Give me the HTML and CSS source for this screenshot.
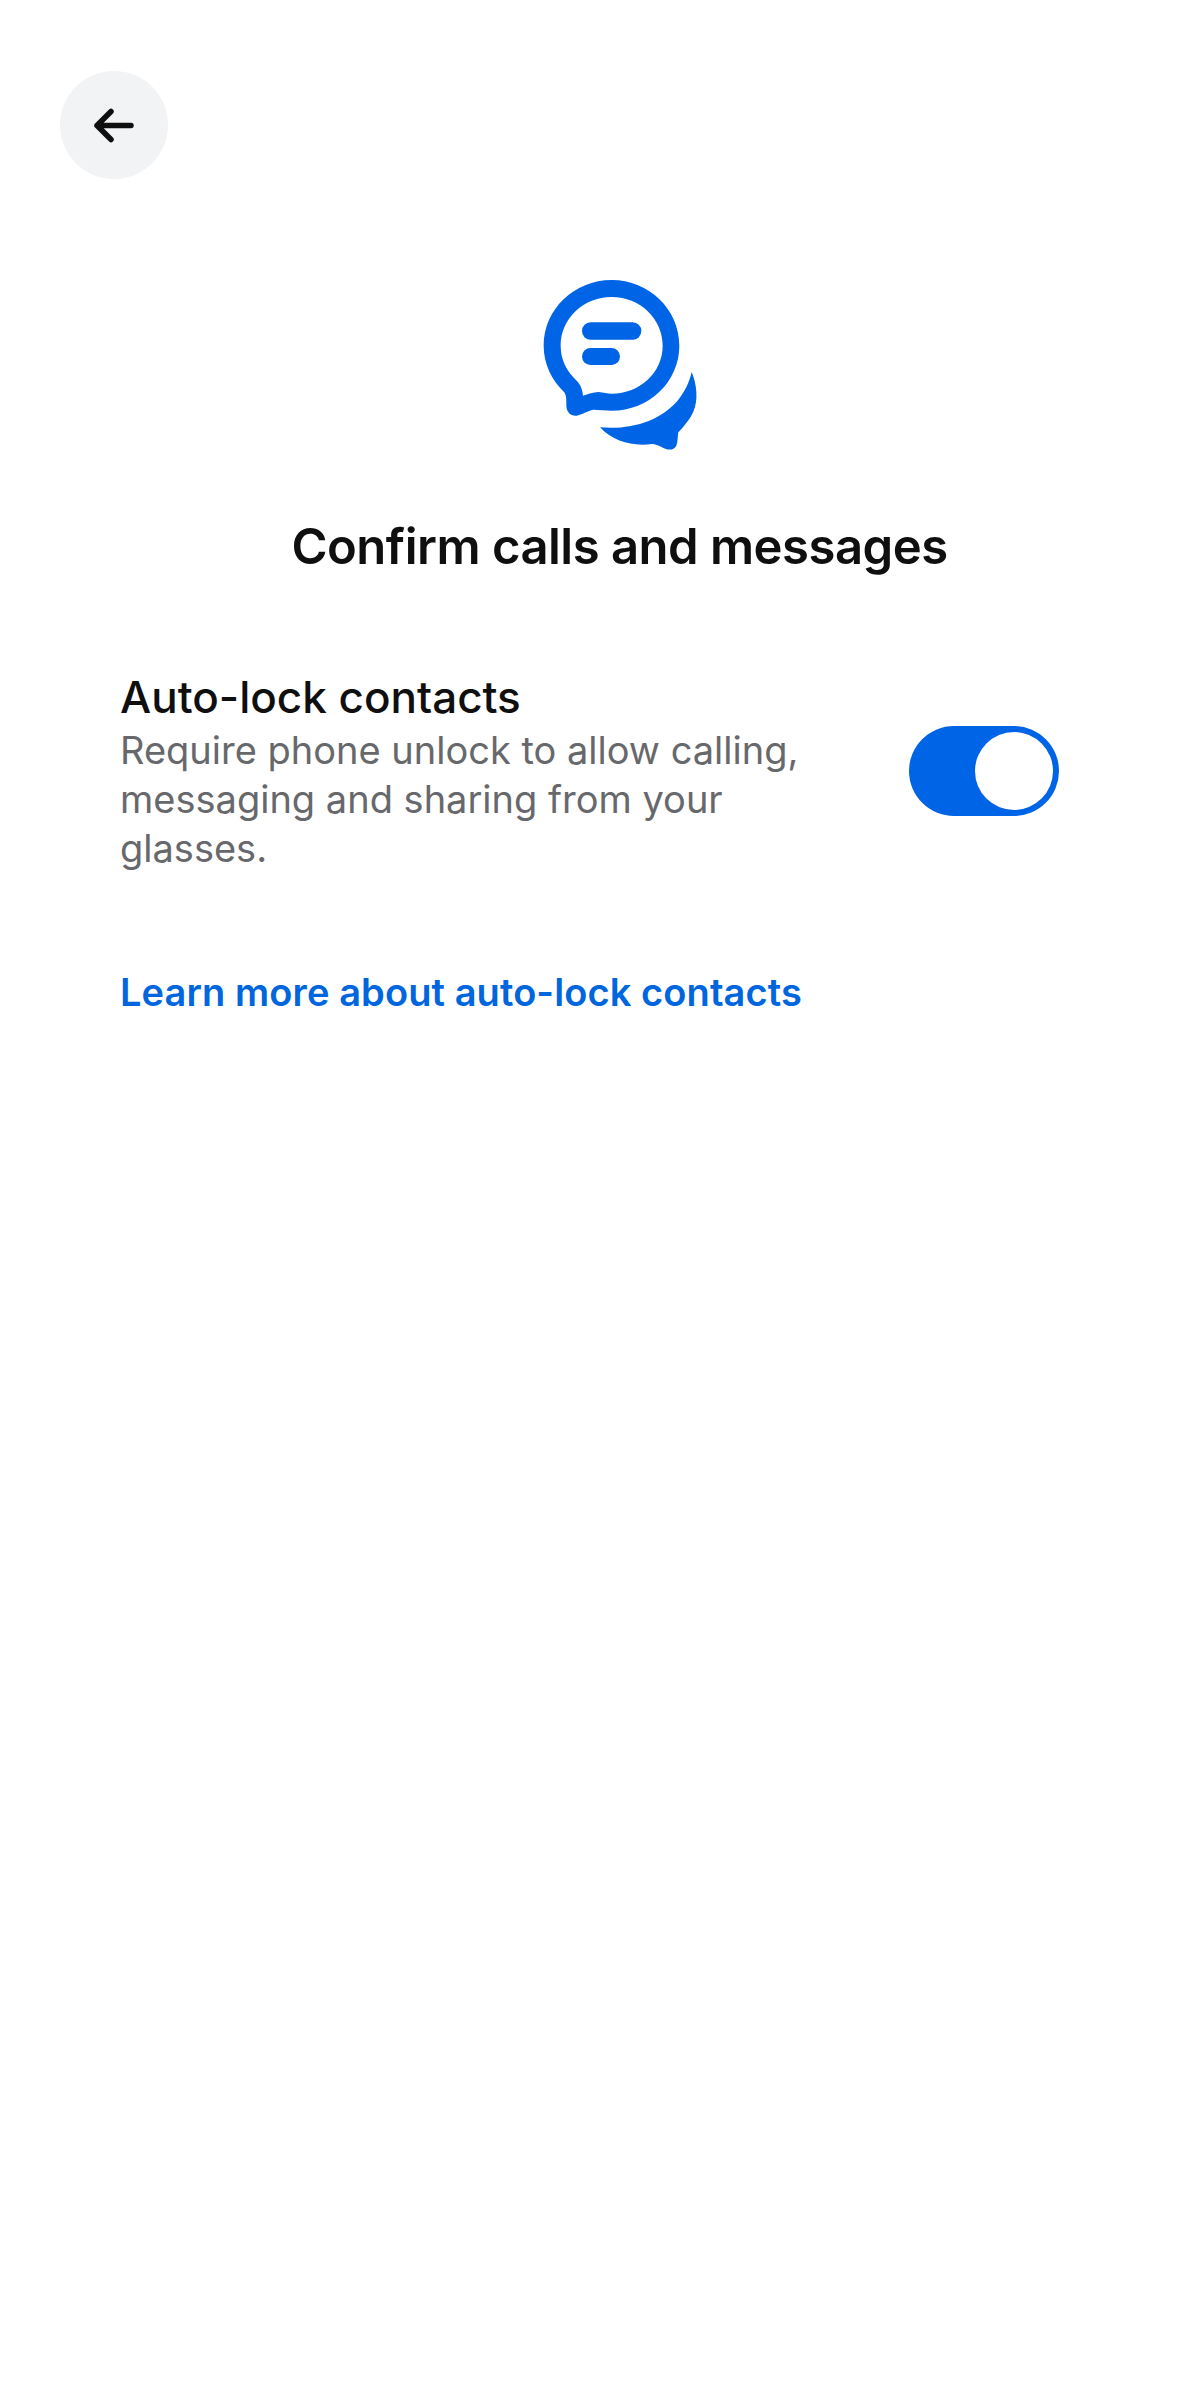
FILE: index.html
```html
<!DOCTYPE html>
<html lang="en">

<head>
  <meta charset="UTF-8">
  <title>Confirm calls and messages</title>
  <link rel="stylesheet" href="styles.css">
</head>

<body>
  <div class="page">
    <div class="topBar">
      <button class="backBtn" type="button" aria-label="Back">
        <svg width="48" height="48" viewBox="0 0 48 48" fill="none" stroke="#0f0f0f" stroke-width="5.500" stroke-linecap="round" stroke-linejoin="round">
          <path d="M7 24.500H41M21 10.500L7 24.500L21 38.500" />
        </svg>
      </button>
    </div>

    <div class="content">
      <svg class="heroIcon" width="190" height="200" viewBox="0 0 570 600" fill="#0064e6">
        <path fill-rule="evenodd" d="M275 60C387 60 478 148 478 257C478 365 387 452 275 452C256 452 238 449 220 449C203 452 190 462 170 467C152 469 140 456 139 438C139 422 140 410 134 398C95 360 71 312 71 257C71 148 163 60 275 60ZM275 111C190 111 122 176 122 257C122 300 140 333 170 362C182 374 187 388 189 407C205 403 219 396 236 396C250 398 262 401 275 401C360 401 428 337 428 257C428 176 360 111 275 111Z" />
        <rect x="186" y="187" width="178" height="52" rx="26" />
        <rect x="186" y="264" width="114" height="51" rx="25.500" />
        <path d="M515 336C530 372 536 420 520 455C510 478 490 500 475 517C472 530 474 545 469 557C462 570 448 571 436 566C420 560 410 552 395 552C340 560 280 545 240 502C340 510 420 480 470 425C492 400 507 370 515 336Z" />
      </svg>

      <h1 class="title">Confirm calls and messages</h1>

      <div class="settingRow">
        <div class="settingText">
          <h2>Auto-lock contacts</h2>
          <p>Require phone unlock to allow calling, messaging and sharing from your glasses.</p>
        </div>
        <div class="toggle">
          <span class="knob"></span>
        </div>
      </div>

      <a class="learnLink" href="#">Learn more about auto-lock contacts</a>
    </div>
  </div>
</body>

</html>
```

FILE: styles.css
```css
* {
  margin: 0;
  padding: 0;
  box-sizing: border-box;
}

body {
  background-color: #fff;
  font-family: Inter, "Liberation Sans", sans-serif;
  color: #0f0f0f;
}

.page {
  min-height: 2396px;
  padding: 71px 60px 0 60px;
}

.backBtn {
  display: flex;
  align-items: center;
  justify-content: center;
  width: 108px;
  height: 108px;
  border: none;
  border-radius: 50%;
  background-color: #f2f3f5;
}

.content {
  display: flex;
  flex-direction: column;
  align-items: center;
  padding-left: 60px;
}

.heroIcon {
  margin-top: 81px;
  margin-right: 10px;
}

.title {
  margin-top: 56px;
  font-size: 49px;
  line-height: 62px;
  font-weight: 600;
  letter-spacing: -0.5px;
}

.settingRow {
  display: flex;
  align-items: center;
  justify-content: space-between;
  width: 939px;
  align-self: flex-start;
  margin-top: 91px;
}

.settingText {
  width: 720px;
}

.settingText h2 {
  font-size: 44px;
  line-height: 57px;
  font-weight: 500;
}

.settingText p {
  font-size: 38px;
  line-height: 49px;
  color: #67686b;
}

.toggle {
  display: flex;
  justify-content: flex-end;
  align-items: center;
  width: 150px;
  height: 90px;
  padding-right: 6px;
  border-radius: 45px;
  background-color: #0064e6;
}

.knob {
  width: 78px;
  height: 78px;
  border-radius: 50%;
  background-color: #fff;
}

.learnLink {
  align-self: flex-start;
  margin-top: 94px;
  font-size: 38px;
  line-height: 50px;
  font-weight: 600;
  letter-spacing: 0.1px;
  color: #0066de;
  text-decoration: none;
}
```
